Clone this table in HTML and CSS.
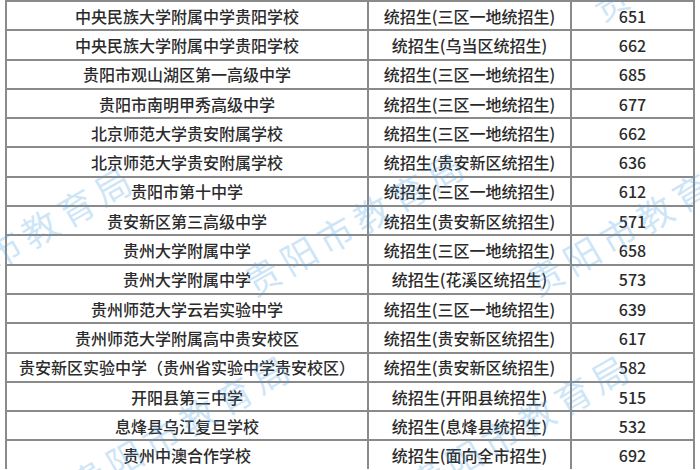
FILE: index.html
```html
<!DOCTYPE html>
<html lang="zh-CN">
<head>
<meta charset="utf-8">
<title>录取分数</title>
<link rel="stylesheet" href="styles.css">
</head>
<body>
<div class="sheet">
  <div class="row"><div class="c">中央民族大学附属中学贵阳学校</div><div class="c">统招生(三区一地统招生)</div><div class="c">651</div></div>
  <div class="row"><div class="c">中央民族大学附属中学贵阳学校</div><div class="c">统招生(乌当区统招生)</div><div class="c">662</div></div>
  <div class="row"><div class="c">贵阳市观山湖区第一高级中学</div><div class="c">统招生(三区一地统招生)</div><div class="c">685</div></div>
  <div class="row"><div class="c">贵阳市南明甲秀高级中学</div><div class="c">统招生(三区一地统招生)</div><div class="c">677</div></div>
  <div class="row"><div class="c">北京师范大学贵安附属学校</div><div class="c">统招生(三区一地统招生)</div><div class="c">662</div></div>
  <div class="row"><div class="c">北京师范大学贵安附属学校</div><div class="c">统招生(贵安新区统招生)</div><div class="c">636</div></div>
  <div class="row"><div class="c">贵阳市第十中学</div><div class="c">统招生(三区一地统招生)</div><div class="c">612</div></div>
  <div class="row"><div class="c">贵安新区第三高级中学</div><div class="c">统招生(贵安新区统招生)</div><div class="c">571</div></div>
  <div class="row"><div class="c">贵州大学附属中学</div><div class="c">统招生(三区一地统招生)</div><div class="c">658</div></div>
  <div class="row"><div class="c">贵州大学附属中学</div><div class="c">统招生(花溪区统招生)</div><div class="c">573</div></div>
  <div class="row"><div class="c">贵州师范大学云岩实验中学</div><div class="c">统招生(三区一地统招生)</div><div class="c">639</div></div>
  <div class="row"><div class="c">贵州师范大学附属高中贵安校区</div><div class="c">统招生(贵安新区统招生)</div><div class="c">617</div></div>
  <div class="row"><div class="c">贵安新区实验中学（贵州省实验中学贵安校区）</div><div class="c">统招生(贵安新区统招生)</div><div class="c">582</div></div>
  <div class="row"><div class="c">开阳县第三中学</div><div class="c">统招生(开阳县统招生)</div><div class="c">515</div></div>
  <div class="row"><div class="c">息烽县乌江复旦学校</div><div class="c">统招生(息烽县统招生)</div><div class="c">532</div></div>
  <div class="row"><div class="c">贵州中澳合作学校</div><div class="c">统招生(面向全市招生)</div><div class="c">692</div></div>
</div>
<div class="wm wm-a">贵阳市教育局</div>
<div class="wm wm-b">贵阳市教育局</div>
<div class="wm wm-c">贵阳市教育局</div>
<div class="wm wm-top">贵阳市教育局</div>
<div class="wm wm-bl">贵阳市教育局</div>
<div class="wm wm-br">贵阳市教育局</div>
</body>
</html>
```
FILE: styles.css
```css
html, body {
  margin: 0;
  padding: 0;
  background: #fff;
  width: 700px;
  height: 470px;
  overflow: hidden;
  position: relative;
}
.sheet {
  margin-left: 5px;
  width: 690px;
  box-sizing: border-box;
  border-left: 2px solid #8a8a8a;
  border-right: 2px solid #8a8a8a;
  font-family: "Noto Sans CJK SC", "Noto Sans", sans-serif;
  font-size: 16px;
  font-weight: 500;
  color: #2b2b2b;
}
.row {
  display: grid;
  grid-template-columns: 360px 203px 1fr;
  height: 29.3px;
  box-sizing: border-box;
  border-top: 2px solid #8a8a8a;
}
.c {
  display: flex;
  align-items: center;
  justify-content: center;
  white-space: nowrap;
  overflow: hidden;
  line-height: 1;
}
.c + .c {
  border-left: 2px solid #8a8a8a;
}
.wm {
  position: absolute;
  font-family: "Noto Sans CJK SC", sans-serif;
  font-size: 36px;
  line-height: 1;
  letter-spacing: 6px;
  color: rgba(80, 165, 230, 0.28);
  transform: rotate(-30deg);
  transform-origin: left center;
  white-space: nowrap;
  pointer-events: none;
}
.wm-a { left: -86px; top: 281px; }
.wm-b { left: 246px; top: 266px; }
.wm-c { left: 529px; top: 266px; }
.wm-top { left: 594px; top: -9px; }
.wm-bl { left: 72px; top: 469px; }
.wm-br { left: 411px; top: 469px; }
```
